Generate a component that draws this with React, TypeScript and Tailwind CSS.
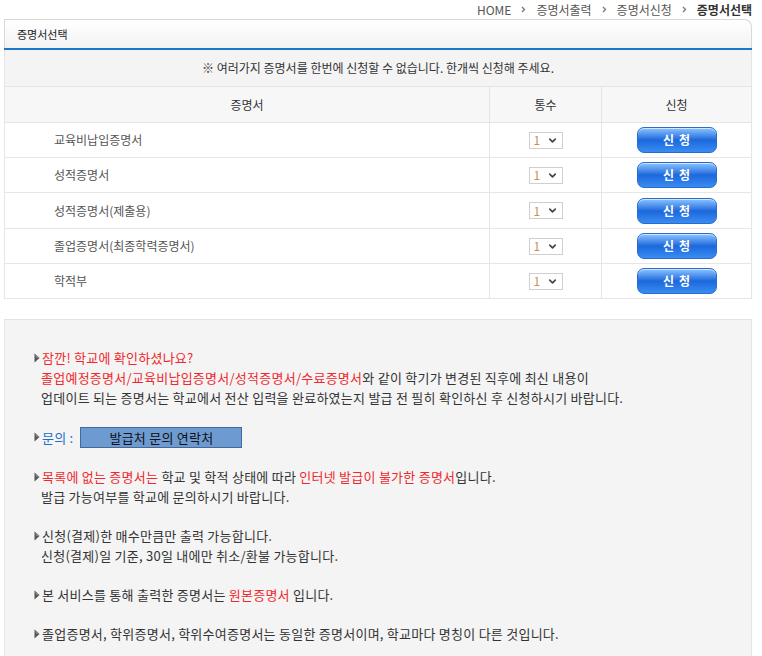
import React from 'react';
import { ChevronDown } from 'lucide-react';

const certs = ['교육비납입증명서', '성적증명서', '성적증명서(제출용)', '졸업증명서(최종학력증명서)', '학적부'];

const Arrow = () => (
  <svg width="5" height="7" viewBox="0 0 5 7" className="mx-[10px]">
    <path d="M1 1 L3.5 3.5 L1 6" fill="none" stroke="#777" strokeWidth="1.3" />
  </svg>
);

const Mark = () => (
  <svg width="6" height="10" viewBox="0 0 6 10" className="inline-block mr-[2px] -mt-[2px] align-middle">
    <polygon points="0.5,0.5 5.5,5 0.5,9.5" fill="#555" />
    <polygon points="0.5,0.5 5.5,5 2.5,5" fill="#888" />
  </svg>
);

const Red = ({ children }: { children: React.ReactNode }) => <span className="text-[#f0282d]">{children}</span>;

export default function App() {
  return (
    <div className="w-[762px] min-h-[656px] overflow-hidden bg-white text-[#333] font-['Noto_Sans_CJK_KR',sans-serif]">
      {/* breadcrumb */}
      <div className="flex h-[19px] items-center justify-end pr-[10px] text-[12px] leading-none text-[#555]">
        <span>HOME</span>
        <Arrow />
        <span>증명서출력</span>
        <Arrow />
        <span>증명서신청</span>
        <Arrow />
        <span className="font-bold text-[#333]">증명서선택</span>
      </div>

      <div className="ml-[4px] w-[748px]">
        <div className="flex h-[29px] items-center rounded-tr-[8px] border border-b-0 border-[#d8d8d8] bg-gradient-to-b from-white to-[#f3f3f3] pl-[12px] text-[11px] text-[#222]">
          증명서선택
        </div>
        <div className="h-[2px] bg-[#1b78c8]" />

        <div className="flex h-[37px] items-center justify-center border-x border-b border-[#e4e4e4] bg-[#f4f4f4] text-[12px] text-[#333]">
          ※ 여러가지 증명서를 한번에 신청할 수 없습니다. 한개씩 신청해 주세요.
        </div>

        <div className="grid h-[36px] grid-cols-[485px_112px_149px] border-x border-b border-[#e4e4e4] bg-[#f7f7f7] text-[12px] text-[#333]">
          <div className="flex items-center justify-center border-r border-[#e4e4e4]">증명서</div>
          <div className="flex items-center justify-center border-r border-[#e4e4e4]">통수</div>
          <div className="flex items-center justify-center">신청</div>
        </div>

        {certs.map((c, i) => (
          <div
            key={c}
            className={`grid grid-cols-[485px_112px_149px] border-x border-b border-[#e6e6e6] bg-white text-[12px] text-[#555] ${i === 2 ? 'h-[36px]' : 'h-[35px]'}`}
          >
            <div className="flex items-center border-r border-[#e6e6e6] pl-[49px]">{c}</div>
            <div className="flex items-center justify-center border-r border-[#e6e6e6]">
              <div className="flex h-[17px] w-[34px] items-center justify-between border border-[#cfcfcf] bg-white pl-[4px] pr-[4px] text-[12px] text-[#c8924e]">
                <span>1</span>
                <ChevronDown size={11} strokeWidth={3.5} className="text-[#444]" />
              </div>
            </div>
            <div className="flex items-center justify-center">
              <button className="flex h-[26px] w-[80px] items-center justify-center rounded-[7px] border border-[#2a6ccc] bg-gradient-to-b from-[#8cc4ff] via-[#1b68dc] to-[#3a8cf2] text-[12px] font-bold tracking-[5px] text-white shadow-[inset_0_1px_0_rgba(255,255,255,0.6)]">
                <span className="pl-[5px]">신청</span>
              </button>
            </div>
          </div>
        ))}

        <div className="mt-[20px] flex flex-col gap-[19px] border border-[#e4e4e4] bg-[#f4f4f4] pb-[30px] pl-[29px] pt-[28px] text-[13px] leading-[20px] tracking-[0.25px] text-[#333]">
          <div>
            <div><Mark /><Red>잠깐! 학교에 확인하셨나요?</Red></div>
            <div className="pl-[7px]"><Red>졸업예정증명서/교육비납입증명서/성적증명서/수료증명서</Red>와 같이 학기가 변경된 직후에 최신 내용이</div>
            <div className="pl-[7px]">업데이트 되는 증명서는 학교에서 전산 입력을 완료하였는지 발급 전 필히 확인하신 후 신청하시기 바랍니다.</div>
          </div>
          <div className="flex items-center">
            <Mark />
            <span className="text-[#1e6fc5]">문의 :</span>
            <span className="ml-[7px] flex h-[21px] w-[162px] items-center justify-center border border-[#45699c] bg-[#6d9bd1] text-[13px] text-[#111]">
              발급처 문의 연락처
            </span>
          </div>
          <div>
            <div><Mark /><Red>목록에 없는 증명서는</Red> 학교 및 학적 상태에 따라 <Red>인터넷 발급이 불가한 증명서</Red>입니다.</div>
            <div className="pl-[7px]">발급 가능여부를 학교에 문의하시기 바랍니다.</div>
          </div>
          <div>
            <div><Mark />신청(결제)한 매수만큼만 출력 가능합니다.</div>
            <div className="pl-[7px]">신청(결제)일 기준, 30일 내에만 취소/환불 가능합니다.</div>
          </div>
          <div>
            <div><Mark />본 서비스를 통해 출력한 증명서는 <Red>원본증명서</Red> 입니다.</div>
          </div>
          <div>
            <div><Mark />졸업증명서, 학위증명서, 학위수여증명서는 동일한 증명서이며, 학교마다 명칭이 다른 것입니다.</div>
          </div>
        </div>
      </div>
    </div>
  );
}
